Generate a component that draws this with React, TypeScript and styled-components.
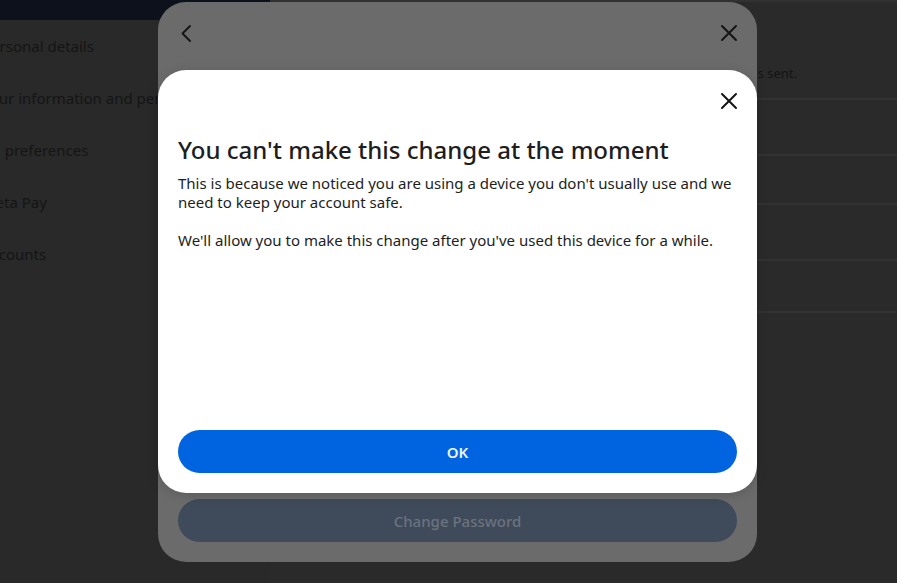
import React from "react";
import styled, { createGlobalStyle } from "styled-components";

const GlobalStyle = createGlobalStyle`
  html, body {
    margin: 0;
    padding: 0;
    background: #292929;
    overflow: hidden;
  }
  * {
    box-sizing: border-box;
  }
  body {
    font-family: "Noto Sans", "Liberation Sans", Arial, sans-serif;
  }
`;

const Page = styled.div`
  position: relative;
  width: 897px;
  height: 583px;
  overflow: hidden;
  background: #292929;
  display: flex;
  flex-direction: row;
`;

const Sidebar = styled.nav`
  width: 270px;
  flex-shrink: 0;
  display: flex;
  flex-direction: column;
  overflow: hidden;
`;

const TopBar = styled.div`
  height: 20px;
  background: #0c111b;
  flex-shrink: 0;
  margin-bottom: 15px;
`;

const SidebarItem = styled.div`
  height: 52px;
  margin-left: -18px;
  font-size: 15px;
  line-height: 22px;
  color: #151515;
  white-space: nowrap;
`;

const Main = styled.main`
  flex: 1;
  display: flex;
  flex-direction: column;
  background: #2a2a2a;
  border-top: 2px solid #313131;
  padding: 0 100px 0 28px;
`;

const Row = styled.div<{ $height: number }>`
  height: ${(p) => p.$height}px;
  flex-shrink: 0;
  display: flex;
  flex-direction: column;
  justify-content: flex-end;
  padding-bottom: 16px;
  margin-right: -100px;
  padding-right: 100px;
  border-bottom: 2px solid #323232;
`;

const RowText = styled.div`
  font-size: 13px;
  line-height: 18px;
  color: #141414;
  white-space: nowrap;
  text-align: right;
`;

const BackModal = styled.div`
  position: absolute;
  top: 2px;
  left: 158px;
  width: 599px;
  height: 560px;
  border-radius: 28px;
  background: #6b6b6b;
  display: flex;
  flex-direction: column;
`;

const ModalHeader = styled.div<{ $end?: boolean }>`
  height: 62px;
  flex-shrink: 0;
  display: flex;
  align-items: center;
  justify-content: ${(p) => (p.$end ? "flex-end" : "space-between")};
  padding: 0 19px 0 23px;
`;

const IconButton = styled.button`
  border: none;
  background: none;
  padding: 0;
  display: flex;
  align-items: center;
  justify-content: center;
  color: #141414;
  cursor: pointer;
`;

const Spacer = styled.div`
  flex: 1;
`;

const PillButton = styled.button<{ $disabled?: boolean }>`
  height: 43px;
  width: 100%;
  border: none;
  border-radius: 22px;
  flex-shrink: 0;
  font-family: inherit;
  font-size: 15px;
  background: ${(p) => (p.$disabled ? "#3f4a5a" : "#0064e0")};
  color: ${(p) => (p.$disabled ? "#6b737e" : "#eef4ff")};
  font-weight: ${(p) => (p.$disabled ? 500 : 600)};
`;

const ButtonWrap = styled.div`
  padding: 0 20px 20px;
`;

const FrontModal = styled.div`
  position: absolute;
  top: 70px;
  left: 158px;
  width: 599px;
  height: 423px;
  border-radius: 28px;
  background: #ffffff;
  display: flex;
  flex-direction: column;
  box-shadow: 0 2px 12px rgba(0, 0, 0, 0.15);
`;

const Content = styled.div`
  flex: 1;
  display: flex;
  flex-direction: column;
  padding: 0 20px 20px;
`;

const Title = styled.h2`
  margin: 3px 0 0;
  font-size: 24px;
  line-height: 30px;
  font-weight: 500;
  color: #1c1e21;
`;

const Paragraph = styled.p`
  margin: 9px 0 0;
  font-size: 15px;
  line-height: 19px;
  color: #1c1e21;
  & + & {
    margin-top: 19px;
  }
`;

const CloseIcon = () => (
  <svg width="18" height="18" viewBox="0 0 18 18" fill="none">
    <path d="M2 2 L16 16 M16 2 L2 16" stroke="currentColor" strokeWidth="2" strokeLinecap="round" />
  </svg>
);

const BackIcon = () => (
  <svg width="10" height="17" viewBox="0 0 10 17" fill="none">
    <path d="M9 1 L1.5 8.5 L9 16" stroke="currentColor" strokeWidth="1.8" strokeLinecap="round" strokeLinejoin="round" />
  </svg>
);

const sidebarItems = [
  "Personal details",
  "Your information and permissions",
  "Ad preferences",
  "Meta Pay",
  "Accounts",
];

const rowHeights = [98, 56, 49, 56, 52];

const App: React.FC = () => {
  return (
    <>
      <GlobalStyle />
      <Page>
        <Sidebar>
          <TopBar />
          {sidebarItems.map((item) => (
            <SidebarItem key={item}>{item}</SidebarItem>
          ))}
        </Sidebar>
        <Main>
          {rowHeights.map((h, i) => (
            <Row key={i} $height={h}>
              {i === 0 && (
                <RowText>Get an alert when we notice an unusual login and choose where it's sent.</RowText>
              )}
            </Row>
          ))}
        </Main>

        <BackModal>
          <ModalHeader>
            <IconButton aria-label="Back">
              <BackIcon />
            </IconButton>
            <IconButton aria-label="Close">
              <CloseIcon />
            </IconButton>
          </ModalHeader>
          <Spacer />
          <ButtonWrap>
            <PillButton $disabled>Change Password</PillButton>
          </ButtonWrap>
        </BackModal>

        <FrontModal>
          <ModalHeader $end>
            <IconButton aria-label="Close">
              <CloseIcon />
            </IconButton>
          </ModalHeader>
          <Content>
            <Title>You can't make this change at the moment</Title>
            <Paragraph>
              This is because we noticed you are using a device you don't usually use and we need to
              keep your account safe.
            </Paragraph>
            <Paragraph>
              We'll allow you to make this change after you've used this device for a while.
            </Paragraph>
            <Spacer />
            <PillButton>OK</PillButton>
          </Content>
        </FrontModal>
      </Page>
    </>
  );
};

export default App;
